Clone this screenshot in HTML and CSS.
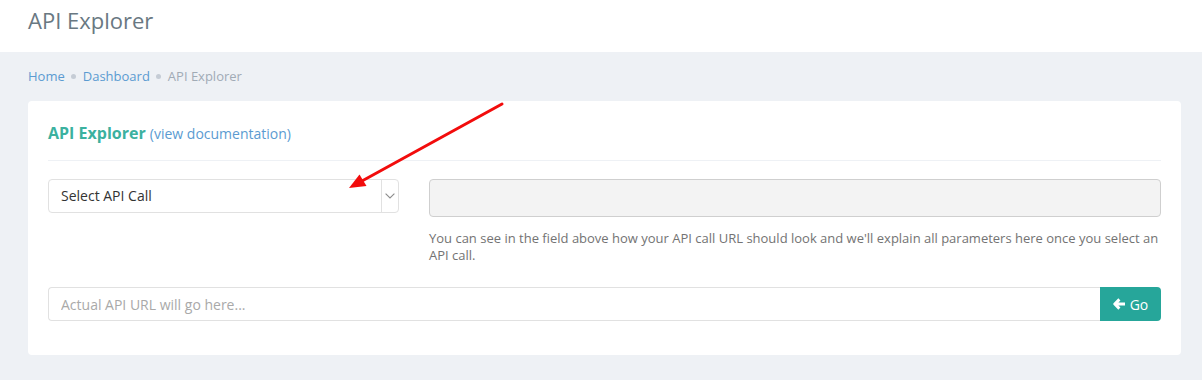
FILE: index.html
```html
<!doctype html>
<html lang="en">
<head>
  <meta charset="utf-8">
  <link rel="stylesheet" href="styles.css">
</head>
<body>

  <div class="page-head">
    <h1 class="page-title">API Explorer</h1>
  </div>

  <div class="page-content">
    <ul class="breadcrumb">
      <li><a href="#">Home</a></li>
      <li><a href="#">Dashboard</a></li>
      <li class="active">API Explorer</li>
    </ul>

    <div class="portlet">
      <div class="portlet-title">
        <span class="caption">API Explorer</span>
        <span class="caption-sub">(<a href="#">view documentation</a>)</span>
      </div>

      <div class="explorer-row">
        <div class="select-box">
          <span class="select-text">Select API Call</span>
          <span class="select-arrow">
            <svg width="10" height="6" viewBox="0 0 10 6"><polyline points="0.6,0.6 5,5 9.4,0.6" fill="none" stroke="#8c8c8c" stroke-width="1.1"/></svg>
          </span>
        </div>
        <div class="explain">
          <div class="readonly-input"></div>
          <p class="help-text">You can see in the field above how your API call URL should look and we'll explain all parameters here once you select an API call.</p>
        </div>
      </div>

      <div class="input-group">
        <input class="url-input" type="text" placeholder="Actual API URL will go here...">
        <button class="go-btn">
          <svg width="13" height="12" viewBox="0 0 13 12"><path d="M6.4 1.4 L1.8 6 L6.4 10.6 M2.2 6 H12" fill="none" stroke="#fff" stroke-width="3" stroke-linejoin="round"/></svg>
          Go
        </button>
      </div>
    </div>
  </div>

  <svg class="pointer" width="170" height="100" viewBox="0 0 170 100">
    <line x1="162" y1="9" x2="22" y2="86" stroke="#f20c0c" stroke-width="3" stroke-linecap="round"/>
    <polygon points="9,93 26.5,91 19.5,79.5" fill="#f20c0c"/>
  </svg>

</body>
</html>
```

FILE: styles.css
```css
html, body {
  margin: 0;
  padding: 0;
  font-family: "Open Sans", Arial, sans-serif;
  background-color: #eef1f5;
  color: #333;
}

body {
  position: relative;
  height: 380px;
  overflow: hidden;
}

a {
  color: #5b9bd1;
  text-decoration: none;
}

.page-head {
  background-color: #fff;
  height: 52px;
  box-sizing: border-box;
  padding: 5px 28px 0;
}

.page-title {
  margin: 0;
  font-size: 22px;
  line-height: 30px;
  font-weight: 400;
  color: #697882;
}

.page-content {
  padding: 0 21px 0 28px;
}

.breadcrumb {
  list-style: none;
  margin: 14px 0 15px;
  padding: 0;
  display: flex;
  align-items: center;
  font-size: 13px;
  line-height: 20px;
}

.breadcrumb li + li::before {
  content: "";
  display: inline-block;
  width: 5px;
  height: 5px;
  border-radius: 50%;
  background-color: #c5ccd5;
  margin: 0 7px 0 6px;
  vertical-align: middle;
  position: relative;
  top: -1px;
}

.breadcrumb .active {
  color: #a1abb5;
}

.portlet {
  background-color: #fff;
  border-radius: 4px;
  padding: 20px 20px 34px;
}

.portlet-title {
  line-height: 24px;
  padding-bottom: 14px;
  border-bottom: 1px solid #eef1f5;
  margin-bottom: 18px;
}

.caption {
  font-size: 16px;
  font-weight: 700;
  color: #3bb19f;
}

.caption-sub {
  font-size: 14px;
  color: #5b9bd1;
}

.explorer-row {
  display: grid;
  grid-template-columns: calc((100% + 30px) / 3 - 30px) 1fr;
  column-gap: 30px;
  align-items: start;
}

.select-box {
  display: flex;
  height: 34px;
  box-sizing: border-box;
  border: 1px solid #e1e1e1;
  border-radius: 4px;
}

.select-text {
  flex: 1;
  padding: 0 12px;
  font-size: 14px;
  line-height: 32px;
  color: #333;
}

.select-arrow {
  width: 16px;
  border-left: 1px solid #e1e1e1;
  display: flex;
  align-items: center;
  justify-content: center;
}

.readonly-input {
  height: 38px;
  box-sizing: border-box;
  background-color: #f3f3f3;
  border: 1px solid #cfcfcf;
  border-radius: 4px;
}

.help-text {
  margin: 13px 0 0;
  font-size: 13px;
  line-height: 17px;
  color: #737373;
}

.input-group {
  display: flex;
  margin-top: 23px;
  height: 34px;
}

.url-input {
  flex: 1;
  box-sizing: border-box;
  height: 34px;
  border: 1px solid #e1e1e1;
  border-right: 0;
  border-radius: 4px 0 0 4px;
  padding: 0 12px;
  font-family: "Open Sans", Arial, sans-serif;
  font-size: 14px;
  color: #333;
  outline: none;
}

.url-input::placeholder {
  color: #a9a9a9;
}

.go-btn {
  width: 61px;
  height: 34px;
  border: 0;
  border-radius: 0 4px 4px 0;
  background-color: #26a69a;
  color: #fff;
  font-family: "Open Sans", Arial, sans-serif;
  font-size: 14px;
  display: flex;
  align-items: center;
  justify-content: center;
  gap: 4px;
  padding: 0;
}

.pointer {
  position: absolute;
  left: 340px;
  top: 95px;
}
```
